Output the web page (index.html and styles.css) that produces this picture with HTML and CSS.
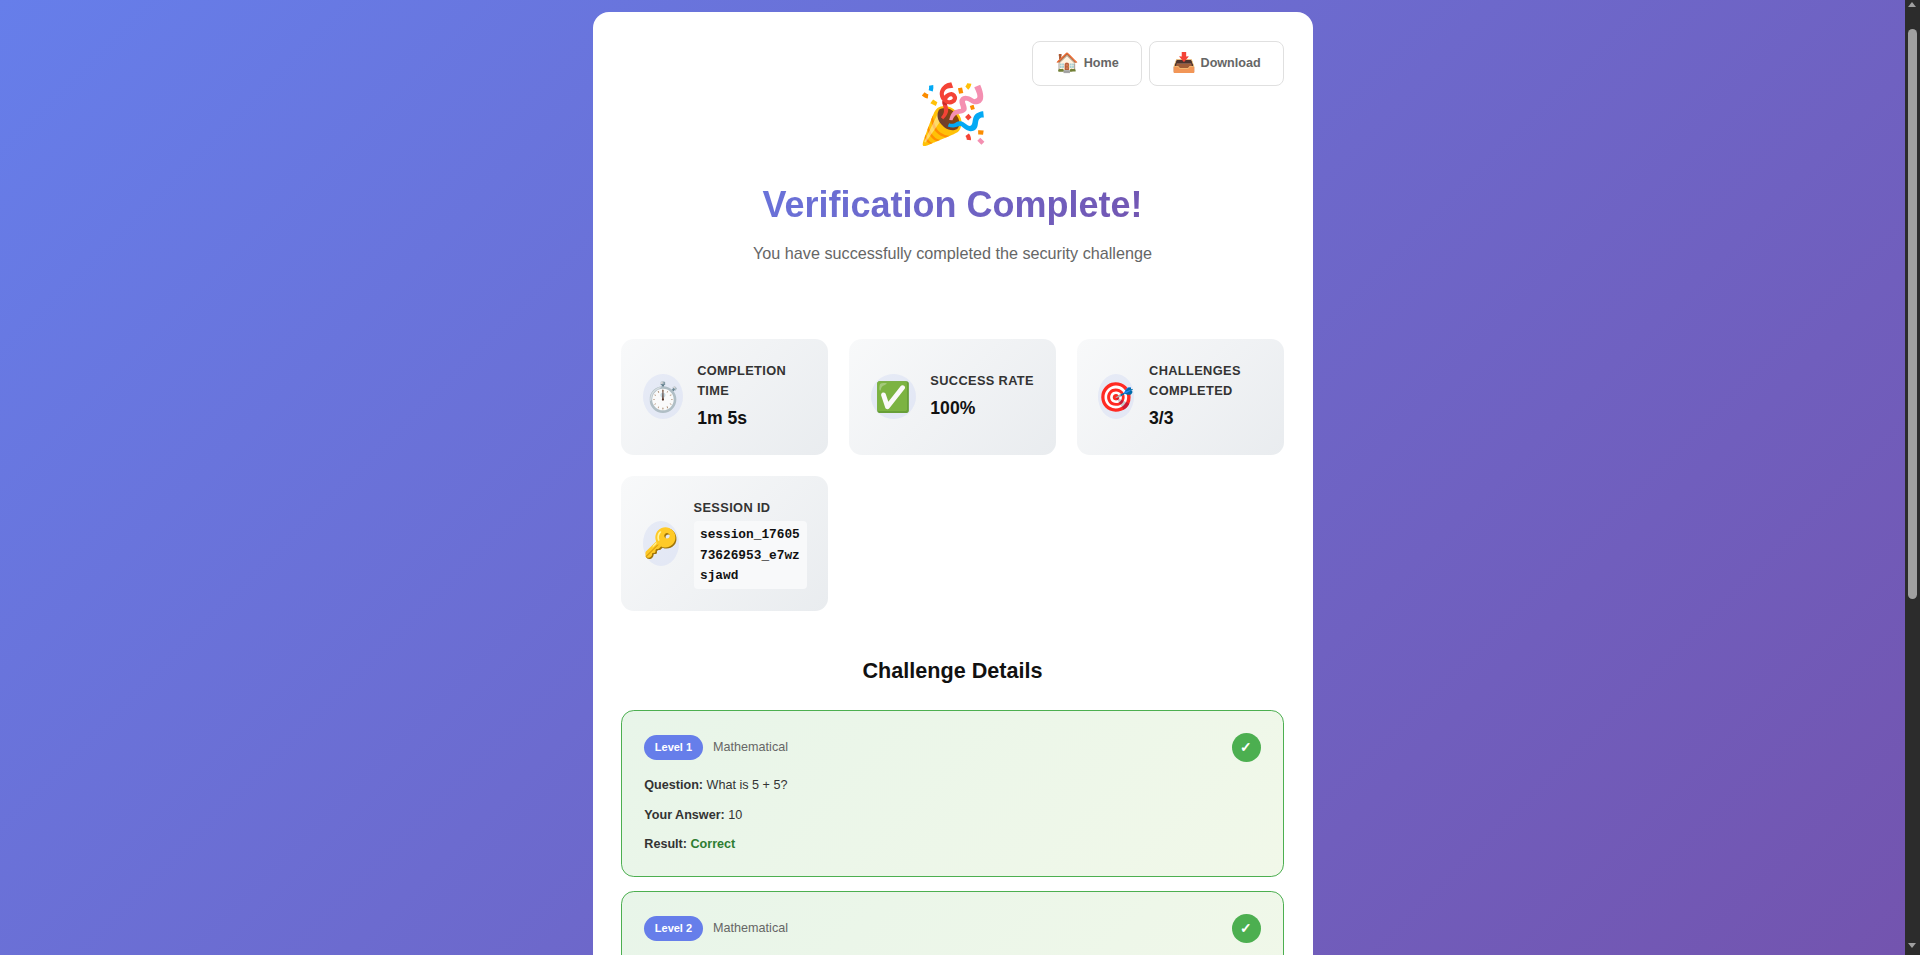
FILE: index.html
```html
<!DOCTYPE html>
<html lang="en">
<head>
    <meta charset="UTF-8">
    <meta name="viewport" content="width=device-width, initial-scale=1.0">
    <title>Verification Complete</title>
    <link rel="stylesheet" href="styles.css">
</head>
<body>
    <div class="container">
        <div class="actions">
            <a class="action-btn" href="#"><span class="action-icon">🏠</span>Home</a>
            <a class="action-btn" href="#"><span class="action-icon">📥</span>Download</a>
        </div>

        <div class="header">
            <div class="party">🎉</div>
            <h1>Verification Complete!</h1>
            <p class="subtitle">You have successfully completed the security challenge</p>
        </div>

        <div class="stats">
            <div class="stat-card">
                <div class="stat-icon">⏱️</div>
                <div class="stat-body">
                    <div class="stat-label">Completion Time</div>
                    <div class="stat-value">1m 5s</div>
                </div>
            </div>
            <div class="stat-card">
                <div class="stat-icon">✅</div>
                <div class="stat-body">
                    <div class="stat-label">Success Rate</div>
                    <div class="stat-value">100%</div>
                </div>
            </div>
            <div class="stat-card">
                <div class="stat-icon">🎯</div>
                <div class="stat-body">
                    <div class="stat-label">Challenges Completed</div>
                    <div class="stat-value">3/3</div>
                </div>
            </div>
            <div class="stat-card">
                <div class="stat-icon">🔑</div>
                <div class="stat-body">
                    <div class="stat-label">Session ID</div>
                    <div class="stat-value"><code class="session-id">session_1760573626953_e7wzsjawd</code></div>
                </div>
            </div>
        </div>

        <h2 class="details-title">Challenge Details</h2>

        <div class="challenges">
            <div class="challenge">
                <div class="challenge-head">
                    <div class="challenge-meta">
                        <span class="level">Level 1</span>
                        <span class="type">Mathematical</span>
                    </div>
                    <div class="check">✓</div>
                </div>
                <p><strong>Question:</strong> What is 5 + 5?</p>
                <p><strong>Your Answer:</strong> 10</p>
                <p><strong>Result:</strong> <span class="correct">Correct</span></p>
            </div>

            <div class="challenge">
                <div class="challenge-head">
                    <div class="challenge-meta">
                        <span class="level">Level 2</span>
                        <span class="type">Mathematical</span>
                    </div>
                    <div class="check">✓</div>
                </div>
                <p><strong>Question:</strong> What is 7 + 3?</p>
                <p><strong>Your Answer:</strong> 10</p>
                <p><strong>Result:</strong> <span class="correct">Correct</span></p>
            </div>

            <div class="challenge">
                <div class="challenge-head">
                    <div class="challenge-meta">
                        <span class="level">Level 3</span>
                        <span class="type">Mathematical</span>
                    </div>
                    <div class="check">✓</div>
                </div>
                <p><strong>Question:</strong> What is 9 + 6?</p>
                <p><strong>Your Answer:</strong> 15</p>
                <p><strong>Result:</strong> <span class="correct">Correct</span></p>
            </div>
        </div>
    </div>

    <!-- the window's scrollbar, headless chrome does not paint one -->
    <div class="scrollbar">
        <span class="arrow-up"></span>
        <span class="thumb"></span>
        <span class="arrow-down"></span>
    </div>
</body>
</html>
```

FILE: styles.css
```css
* {
    box-sizing: border-box;
    margin: 0;
    padding: 0;
}
body {
    font-family: "Liberation Sans", Arial, sans-serif;
    background: linear-gradient(135deg, #667eea 0%, #764ba2 100%);
    color: #333;
    line-height: 1.6;
    padding: 12px 15px 12px 0;
}
.container {
    position: relative;
    width: 720px;
    margin: 0 auto;
    padding: 28.8px;
    background: white;
    border-radius: 16px;
}
.actions {
    position: absolute;
    top: 28.8px;
    right: 28.8px;
    display: flex;
    gap: 7px;
}
.action-btn {
    display: flex;
    align-items: center;
    gap: 4.8px;
    height: 45px;
    padding: 0 22px;
    border: 1px solid #e0e0e0;
    border-radius: 8px;
    background: white;
    color: #666;
    font-size: 12.6px;
    font-weight: 600;
    text-decoration: none;
}
.action-icon {
    font-size: 19.2px;
}
.header {
    text-align: center;
    padding-top: 27.4px;
    margin-bottom: 72.1px;
}
.party {
    font-size: 58px;
    margin-bottom: 15.2px;
}
h1 {
    font-size: 36px;
    font-weight: 700;
    background: linear-gradient(135deg, #667eea, #764ba2);
    -webkit-background-clip: text;
    background-clip: text;
    color: transparent;
    margin-bottom: 7.4px;
}
.subtitle {
    font-size: 16.2px;
    color: #666;
}
.stats {
    display: grid;
    grid-template-columns: repeat(3, 1fr);
    gap: 21.4px 20.8px;
    margin-bottom: 43.5px;
}
.stat-card {
    display: flex;
    align-items: center;
    gap: 14.7px;
    padding: 22px 21.2px 22px 21.6px;
    border-radius: 12.8px;
    background: linear-gradient(135deg, #f8f9fa, #e9ecef);
}
.stat-icon {
    display: flex;
    align-items: center;
    justify-content: center;
    width: 45px;
    height: 45px;
    border-radius: 50%;
    background: rgba(102, 126, 234, 0.1);
    font-size: 28.8px;
}
.stat-label {
    font-size: 12.8px;
    line-height: 20px;
    font-weight: 600;
    letter-spacing: 0.36px;
    text-transform: uppercase;
    color: #333;
}
.stat-value {
    margin-top: 3.2px;
    font-size: 17.6px;
    font-weight: 700;
    color: #111;
}
.session-id {
    display: inline-block;
    padding: 4px 6.4px 2.4px;
    border-radius: 4px;
    background: #f8f9fa;
    font-family: "Liberation Mono", monospace;
    font-size: 12.8px;
    word-break: break-all;
}
.details-title {
    font-size: 21.6px;
    font-weight: 700;
    color: #111;
    text-align: center;
    margin-bottom: 20.9px;
}
.challenges {
    margin-bottom: 270px;
}
.challenge {
    padding: 22px;
    margin-bottom: 13.8px;
    border: 1px solid #4caf50;
    border-radius: 12.8px;
    background: linear-gradient(135deg, #e8f5e9, #f1f8e9);
    font-size: 12.6px;
}
.challenge-head {
    display: flex;
    align-items: center;
    justify-content: space-between;
    margin-bottom: 13px;
}
.challenge-meta {
    display: flex;
    align-items: center;
    gap: 10.5px;
}
.level {
    padding: 3.6px 10.5px;
    border-radius: 12.8px;
    background: #667eea;
    color: white;
    font-size: 11px;
    font-weight: 600;
}
.type {
    color: #666;
}
.check {
    display: flex;
    align-items: center;
    justify-content: center;
    width: 29px;
    height: 29px;
    border-radius: 50%;
    background: #4caf50;
    color: white;
    font-size: 14px;
    font-weight: 700;
}
.challenge p {
    margin-bottom: 9.8px;
}
.challenge p + p {
    margin-bottom: 9px;
}
.challenge p:last-child {
    margin-bottom: 0;
}
.correct {
    color: #2e7d32;
    font-weight: 600;
}
.scrollbar {
    position: fixed;
    top: 0;
    right: 0;
    bottom: 0;
    width: 15px;
    background: #2c2c2c;
}
.thumb {
    position: absolute;
    top: 29px;
    left: 3px;
    width: 9px;
    height: 570px;
    border-radius: 4.5px;
    background: #a0a0a0;
}
.arrow-up,
.arrow-down {
    position: absolute;
    left: 3px;
    border-left: 4.5px solid transparent;
    border-right: 4.5px solid transparent;
}
.arrow-up {
    top: 2px;
    border-bottom: 5px solid #a0a0a0;
}
.arrow-down {
    bottom: 7px;
    border-top: 5px solid #a0a0a0;
}
```
